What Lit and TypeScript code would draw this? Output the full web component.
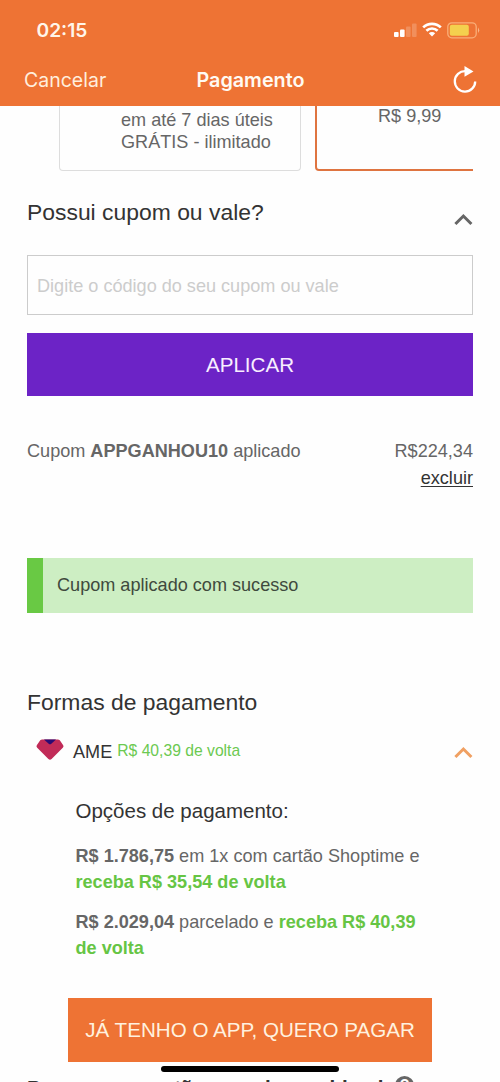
import { css, html, LitElement, svg } from "lit";
import { customElement, property } from "lit/decorators.js";

@customElement("app-chevron")
export class Chevron extends LitElement {
  @property()
  color: string = "#666";

  render() {
    return html`
      <svg width="20" height="13" viewBox="0 0 20 13">
        <path
          d="M2.4 11 L10.4 3 L18.4 11"
          fill="none"
          stroke=${this.color}
          stroke-width="3"
        />
      </svg>
    `;
  }

  static styles = css`
    :host {
      display: block;
      height: 13px;
    }
    svg {
      display: block;
    }
  `;
}

@customElement("app-header")
export class Header extends LitElement {
  signal() {
    const bars = [5, 7.5, 10.5, 13.5];
    return bars.map(
      (h, i) => svg`
        <rect x=${i * 6} y=${14 - h} width="4.6" height=${h} rx="1"
          fill="#fff" fill-opacity=${i < 2 ? 1 : 0.2} />
      `
    );
  }

  render() {
    return html`
      <div class="status">
        <span class="time">02:15</span>
        <div class="icons">
          <svg width="23" height="14" viewBox="0 0 23 14">${this.signal()}</svg>
          <svg class="wifi" width="20" height="15" viewBox="0 0 20 15">
            <g fill="none" stroke="#fff" stroke-width="2.7">
              <path d="M1.2 5.4 A12.6 12.6 0 0 1 18.8 5.4" />
              <path d="M4.4 8.8 A8 8 0 0 1 15.6 8.8" />
            </g>
            <path d="M6.8 11.3 A4.6 4.6 0 0 1 13.2 11.3 L10 14.6 Z" fill="#fff" />
          </svg>
          <svg width="33" height="17" viewBox="0 0 33 17">
            <rect x="0.8" y="0.8" width="28.4" height="15" rx="4"
              fill="none" stroke="#f9ae78" stroke-width="1.3" />
            <rect x="2.8" y="2.8" width="19" height="11" rx="2" fill="#f4d04e" />
            <path d="M31 5.5 Q33.4 8.3 31 11 Z" fill="#f9b78a" />
          </svg>
        </div>
      </div>
      <div class="nav">
        <span class="cancel">Cancelar</span>
        <span class="title">Pagamento</span>
        <svg class="reload" width="24" height="28" viewBox="0 0 24 28">
          <path d="M12.4 5.2 A10.2 10.2 0 1 0 22.2 15.4"
            fill="none" stroke="#fff" stroke-width="2.3" />
          <path d="M11.5 0 L20.5 5.4 L11.5 10.8 Z" fill="#fff" />
        </svg>
      </div>
    `;
  }

  static styles = css`
    :host {
      display: block;
      box-sizing: border-box;
      height: 106px;
      background: #ee7334;
      color: #fff;
      font-family: Inter, sans-serif;
    }
    .status {
      display: flex;
      justify-content: space-between;
      align-items: center;
      height: 60px;
      padding: 0 20px 0 36.5px;
    }
    .time {
      font-size: 19.2px;
      font-weight: 600;
      color: #fff6ea;
    }
    .icons {
      display: flex;
      align-items: center;
      gap: 5px;
    }
    .wifi {
      margin: 0 0 1px;
    }
    .nav {
      display: grid;
      grid-template-columns: 1fr auto 1fr;
      align-items: center;
      height: 40px;
      padding: 0 23px 0 24px;
    }
    .cancel {
      font-size: 19.5px;
      color: #ffeedd;
    }
    .title {
      font-size: 19.8px;
      font-weight: 600;
      color: #fffaf2;
    }
    .reload {
      justify-self: end;
    }
  `;
}

@customElement("app-root")
export class AppRoot extends LitElement {
  render() {
    return html`
      <app-header></app-header>
      <main class="page">
        <div class="shipping">
          <div class="option">em até 7 dias úteis<br />GRÁTIS - ilimitado</div>
          <div class="option selected">R$ 9,99</div>
        </div>

        <div class="heading coupon-heading">
          <span>Possui cupom ou vale?</span>
          <app-chevron class="chevron"></app-chevron>
        </div>
        <div class="field">Digite o código do seu cupom ou vale</div>
        <div class="apply">APLICAR</div>

        <div class="coupon">
          <span>Cupom <b>APPGANHOU10</b> aplicado</span>
          <div class="amount">
            <span>R$224,34</span>
            <span class="remove">excluir</span>
          </div>
        </div>
        <div class="success">Cupom aplicado com sucesso</div>

        <div class="heading payment-heading">Formas de pagamento</div>
        <div class="method">
          <svg width="28" height="22" viewBox="0 0 28 22">
            <path
              d="M6.2 0.5 H21.8 Q23 0.5 23.8 1.3 L27.2 6.3 Q28 7.6 26.8 8.8 L15.6 20.1 Q14 21.6 12.4 20.1 L1.2 8.8 Q0 7.6 0.8 6.3 L4.2 1.3 Q5 0.5 6.2 0.5 Z"
              fill="#c12b58"
            />
            <path d="M8 0.5 H20 L15.3 4.7 Q14 5.8 12.7 4.7 Z" fill="#2b0a72" />
          </svg>
          <span class="name">AME</span>
          <span class="cashback">R$ 40,39 de volta</span>
          <app-chevron class="method-chevron" color="#f0a062"></app-chevron>
        </div>

        <div class="details">
          <div class="details-title">Opções de pagamento:</div>
          <p>
            <b>R$ 1.786,75</b> em 1x com cartão Shoptime e<br />
            <b class="green">receba R$ 35,54 de volta</b>
          </p>
          <p>
            <b>R$ 2.029,04</b> parcelado e <b class="green">receba R$ 40,39</b><br />
            <b class="green">de volta</b>
          </p>
        </div>
        <div class="pay">JÁ TENHO O APP, QUERO PAGAR</div>
        <div class="next">
          <span>Pague com cartão e ganhe cashback</span>
          <span class="help">?</span>
        </div>
      </main>
      <div class="home"></div>
    `;
  }

  static styles = css`
    :host {
      display: block;
      position: relative;
      height: 1082px;
      overflow: hidden;
      background: #fefefe;
      color: #666;
      font-family: "Liberation Sans", Arial, sans-serif;
      font-size: 18.1px;
    }
    .page {
      padding: 0 27px;
      white-space: nowrap;
    }
    .shipping {
      display: flex;
      gap: 14px;
      height: 65px;
      padding-left: 32px;
      line-height: 22px;
      overflow: hidden;
    }
    .option {
      box-sizing: border-box;
      flex: none;
      width: 242px;
      height: 65px;
      padding: 3px 0 0 61px;
      border: 1px solid #ddd;
      border-top: 0;
      border-radius: 0 0 4px 4px;
    }
    .selected {
      padding: 0 0 0 61px;
      line-height: 20px;
      border: 2px solid #df7440;
      border-top: 0;
    }
    .heading {
      color: #333;
      font-size: 22.9px;
      line-height: 28px;
    }
    .coupon-heading {
      display: flex;
      justify-content: space-between;
      padding-top: 27px;
    }
    .chevron {
      padding-top: 15px;
    }
    .field {
      box-sizing: border-box;
      height: 60px;
      margin-top: 29px;
      padding-left: 9px;
      border: 1px solid #ccc;
      line-height: 61px;
      color: #ccc;
    }
    .apply {
      height: 63px;
      margin-top: 18.4px;
      background: #6c23c6;
      color: #f8eeff;
      font-size: 20.6px;
      line-height: 64px;
      text-align: center;
    }
    .coupon {
      display: flex;
      justify-content: space-between;
      height: 162px;
      box-sizing: border-box;
      padding-top: 42px;
      line-height: 27px;
    }
    .amount {
      display: flex;
      flex-direction: column;
      align-items: flex-end;
    }
    .remove {
      color: #333;
      text-decoration: underline;
      text-underline-offset: 2px;
    }
    .success {
      box-sizing: border-box;
      height: 54.5px;
      padding-left: 14px;
      border-left: 16px solid #69c944;
      background: #cdeec3;
      color: #3f4a3d;
      line-height: 54px;
    }
    .payment-heading {
      padding-top: 75px;
    }
    .method {
      display: flex;
      align-items: center;
      height: 22px;
      margin-top: 23.5px;
      padding-left: 9px;
    }
    .name {
      margin: 4px 0 0 9px;
      color: #333;
    }
    .cashback {
      margin: 1px 0 0 5px;
      color: #6cc951;
      font-size: 15.7px;
    }
    .method-chevron {
      margin: 4px 0 0 auto;
    }
    .details {
      padding: 36px 0 0 48.5px;
    }
    .details-title {
      margin-bottom: 17.5px;
      color: #333;
      font-size: 20.5px;
      line-height: 28px;
    }
    .details p {
      margin: 0 0 13px;
      line-height: 26.5px;
    }
    .details .green {
      color: #66c544;
    }
    .pay {
      height: 64px;
      margin: 36.5px 41px 0;
      background: #ee7334;
      color: #fff1df;
      font-size: 20.6px;
      line-height: 64px;
      text-align: center;
    }
    .next {
      display: flex;
      align-items: flex-start;
      gap: 6px;
      padding-top: 14px;
      color: #333;
      font-size: 20.7px;
      font-weight: bold;
      line-height: 24px;
    }
    .help {
      width: 19px;
      height: 19px;
      border-radius: 50%;
      background: #666;
      color: #fff;
      font-size: 16px;
      line-height: 20px;
      text-align: center;
    }
    .home {
      position: absolute;
      left: 161px;
      bottom: 10px;
      width: 178px;
      height: 6px;
      border-radius: 3px;
      background: #000;
    }
  `;
}
